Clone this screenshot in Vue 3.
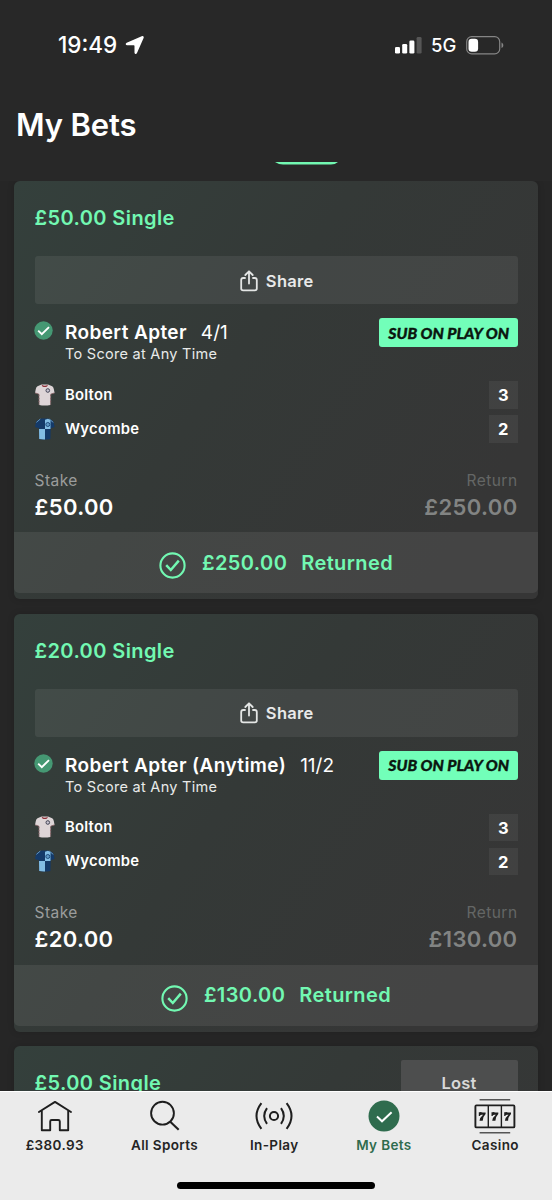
<script setup>
const bets = [
  { id: 1, stake: '£50.00', pick: 'Robert Apter', odds: '4/1', ret: '£250.00' },
  { id: 2, stake: '£20.00', pick: 'Robert Apter (Anytime)', odds: '11/2', ret: '£130.00' },
]
const teams = [
  { name: 'Bolton', score: 3, kit: 'white' },
  { name: 'Wycombe', score: 2, kit: 'blue' },
]
</script>

<template>
  <div class="screen">
    <header class="top">
      <div class="status">
        <div class="clock">
          <span class="time">19:49</span>
          <svg class="loc" width="20" height="20" viewBox="0 0 20 20"><path d="M16.700 1.200 1.700 7.700c-1.600.8-1.200 2.500.5 2.500h6.600c.5 0 .7.200.7.700v6.600c0 1.700 1.800 2.100 2.500.5L18.600 3c.6-1.300-.6-2.400-1.900-1.800Z" fill="#fff" /></svg>
        </div>
        <div class="signal">
          <svg width="28" height="18" viewBox="0 0 28 18">
            <rect x="0" y="11" width="5" height="6.500" rx="1.300" fill="#fff" />
            <rect x="7.200" y="8" width="5" height="9.500" rx="1.300" fill="#fff" />
            <rect x="14.400" y="4.500" width="5" height="13" rx="1.300" fill="#fff" />
            <rect x="21.600" y="1" width="5" height="16.500" rx="1.300" fill="#565656" />
          </svg>
          <span class="net">5G</span>
          <svg width="38" height="19" viewBox="0 0 38 19">
            <rect x=".7" y=".7" width="33" height="17.200" rx="5" fill="none" stroke="#858585" stroke-width="1.200" />
            <rect x="2.500" y="2.700" width="9.600" height="13" rx="3.200" fill="#fff" />
            <path d="M35.500 6.500c2.400 1 2.400 4.600 0 5.600Z" fill="#858585" />
          </svg>
        </div>
      </div>
      <h1>My Bets</h1>
      <svg class="tab-line" width="64" height="3" viewBox="0 0 64 3"><path d="M0 0H63Q60 2.500 56 2.500H8Q4 2.500 0 0Z" fill="#72f8b2" /></svg>
    </header>

    <main class="list">
      <article v-for="bet in bets" :key="bet.id" class="card">
        <h2>{{ bet.stake }} Single</h2>
        <button class="share">
          <svg width="18" height="22" viewBox="0 0 18 22" fill="none" stroke="#e4e6e5" stroke-width="1.800" stroke-linecap="round" stroke-linejoin="round">
            <path d="M5 8H3.200Q1.200 8 1.200 10V18.600Q1.200 20.400 3.200 20.400H14.800Q16.800 20.400 16.800 18.600V10Q16.800 8 14.800 8H13" />
            <path d="M9 13.500V1.600M5.300 5 9 1.300 12.700 5" />
          </svg>
          <span>Share</span>
        </button>
        <section class="selection">
          <svg class="tick" width="19" height="19" viewBox="0 0 19 19"><circle cx="9.500" cy="9.500" r="9.200" fill="#459873" /><path d="m4.200 9.600 3.600 3.500 7.200-7" fill="none" stroke="#fff" stroke-width="1.900" /></svg>
          <div class="pick">
            <p class="pick-line"><b>{{ bet.pick }}</b><span>{{ bet.odds }}</span></p>
            <p class="market">To Score at Any Time</p>
          </div>
          <div class="badge"><span>SUB ON PLAY ON</span></div>
        </section>
        <ul class="teams">
          <li v-for="team in teams" :key="team.name">
            <svg v-if="team.kit === 'white'" width="20" height="22" viewBox="0 0 20 22">
              <path d="M6.500.5 2.500 2.300Q1.200 3 .8 5L0 9l4 1.300.2 10.700q5.600 1 11.200 0L15.700 10.300 19.600 9l-.8-4Q18.400 3 17.200 2.300L13 .5Z" fill="#ddd5d7" />
              <path d="M6.500.5q3.300 2.700 6.500 0l-.9 1.900q-2.300 1.200-4.700 0Z" fill="#8d3038" />
              <path d="M4 10.500V20.500M15.600 10.500V20.500" stroke="#8b686c" stroke-width="1.100" stroke-dasharray="2 1" />
              <path d="m0 8.900 3.800 1.200M19.600 8.900l-3.800 1.200" stroke="#7e575b" stroke-width=".8" />
              <circle cx="12.800" cy="6.500" r="1.800" fill="#c8c4d0" stroke="#414354" stroke-width="1" />
            </svg>
            <svg v-else width="20" height="22" viewBox="0 0 20 22">
              <path d="M6.500.5 2.500 2.300Q1.200 3 .8 5L0 9l4 1.300.2 10.700q5.600 1 11.200 0L15.700 10.300 19.600 9l-.8-4Q18.400 3 17.200 2.300L13 .5Z" fill="#143a69" />
              <path d="M10 1.700 13 .8 15.500 2v9H10ZM4 11h6v10.400Q7 21.500 4.200 21Z" fill="#82bde4" />
              <path d="M1.400 4.400 5.300 1M18.300 4.400 14.200 1" stroke="#6a9dc4" stroke-width=".9" />
              <circle cx="12.800" cy="6.500" r="2" fill="#5e99c7" stroke="#204d7e" stroke-width="1" />
            </svg>
            <span class="name">{{ team.name }}</span>
            <span class="score">{{ team.score }}</span>
          </li>
        </ul>
        <section class="money">
          <div><p class="label">Stake</p><p class="amount">{{ bet.stake }}</p></div>
          <div class="right"><p class="label">Return</p><p class="amount">{{ bet.ret }}</p></div>
        </section>
        <footer class="result">
          <svg width="27" height="27" viewBox="0 0 27 27" fill="none" stroke="#72f8b2" stroke-width="2.100"><circle cx="13.500" cy="13.500" r="12.100" /><path d="m7.200 13.200 4.600 4.800 8-9.400" stroke-width="2.500" /></svg>
          <span class="paid">{{ bet.ret }}</span><span>Returned</span>
        </footer>
      </article>
      <article class="card">
        <div class="last"><h2>£5.00 Single</h2><div class="lost">Lost</div></div>
      </article>
    </main>

    <nav class="nav">
      <div class="tabs">
        <a>
          <svg width="40" height="36" viewBox="0 0 40 36" fill="none" stroke="#1e1e1e" stroke-width="1.900" stroke-linecap="round" stroke-linejoin="round"><path d="M3.900 14 20 3.900 36 14M6.800 12.400V32.200H15.200V23.500Q15.200 22 16.700 22H23.300Q24.800 22 24.800 23.500V32.200H33.200V12.400" /></svg>
          <span>£380.93</span>
        </a>
        <a>
          <svg width="40" height="36" viewBox="0 0 40 36" fill="none" stroke="#1e1e1e" stroke-width="1.900"><circle cx="17.500" cy="15.200" r="11.400" /><path d="m25 23.500 8.700 8.200" stroke-width="2.100" /></svg>
          <span>All Sports</span>
        </a>
        <a>
          <svg width="40" height="36" viewBox="0 0 40 36" fill="none" stroke="#1e1e1e" stroke-width="2"><circle cx="20" cy="18" r="4.100" /><path d="M13 10.200Q7.400 18 13 25.800M27 10.200Q32.600 18 27 25.800M7.400 5.200Q-2.400 18 7.400 30.800M32.600 5.200Q42.400 18 32.600 30.800" /></svg>
          <span>In-Play</span>
        </a>
        <a class="on">
          <svg width="40" height="36" viewBox="0 0 40 36"><circle cx="20" cy="18.100" r="15.500" fill="#2f6c4e" /><path d="m13 18.600 5 4.700 9.600-9.100" fill="none" stroke="#fff" stroke-width="2" /></svg>
          <span>My Bets</span>
        </a>
        <a>
          <svg width="42" height="36" viewBox="0 0 42 36" fill="none" stroke="#1e1e1e" stroke-width="1.900">
            <rect x="1.400" y="7.400" width="39" height="22" rx="1" /><path d="M14.300 7.400v22M27.400 7.400v22" stroke-width="1.400" /><path d="M5.600 1.800H36.200M5.600 34.800H36.200" stroke="#555" stroke-width="1.500" />
            <g fill="#1e1e1e" stroke="none"><path id="seven" d="M4.800 14.200H5.800Q6.900 13.600 8.600 14.500H11.600V16Q8.700 18.800 8.700 22.800H5.500Q5.800 19.600 9.100 16.800Q6.500 16.300 5.800 17.900H4.800Z" /><use href="#seven" x="12.700" /><use href="#seven" x="25.400" /></g>
          </svg>
          <span>Casino</span>
        </a>
      </div>
      <div class="home-bar"></div>
    </nav>
  </div>
</template>

<style>
body { background: #272727; }
</style>

<style scoped>
* { box-sizing: border-box; }
h1, h2, p, ul { margin: 0; padding: 0; }
.screen { width: 552px; height: 1200px; overflow: hidden; display: flex; flex-direction: column; background: #262626; color: #fff; font-family: Inter, "Noto Sans", sans-serif; }
.top { height: 181px; flex: none; background: #282828; }
.status { display: flex; justify-content: space-between; align-items: center; padding: 33px 48px 0 58px; height: 57px; }
.clock, .signal { display: flex; align-items: center; }
.time { font-size: 22.500px; font-weight: 550; line-height: 24px; width: 62px; white-space: nowrap; }
.loc { margin-left: 5px; }
.net { font-size: 18.500px; font-weight: 450; width: 25px; margin: 0 10px 0 8px; line-height: 24px; }
h1 { font-size: 31px; line-height: 40px; font-weight: 600; letter-spacing: -.15px; margin: 48px 0 0 16px; height: 57px; }
.tab-line { display: block; margin-left: 275px; }
.list { flex: 1; min-height: 0; overflow: hidden; padding: 0 14px; display: flex; flex-direction: column; gap: 14.500px; }
.card { flex: none; height: 418px; border-radius: 6px; background: linear-gradient(125deg, #34403c 0%, #343937 42%, #363636 85%); box-shadow: 0 0 7px rgba(0, 0, 0, .14); padding: 25px 20.500px 0; display: flex; flex-direction: column; }
h2 { color: #72f8b2; font-size: 20px; line-height: 24px; font-weight: 600; letter-spacing: .4px; white-space: nowrap; }
.share { flex: none; margin-top: 26px; height: 48px; border: 0; border-radius: 3px; background: rgba(255, 255, 255, .07); display: flex; align-items: center; justify-content: center; gap: 8px; color: #e8e9e9; font: 600 16.500px/20px Inter, sans-serif; letter-spacing: .3px; padding: 1px 0 0 1.500px; }
.selection { display: flex; margin-top: 14px; height: 62px; }
.tick { margin: 3px 0 0 -1px; }
.pick { margin-left: 12.500px; flex: 1; padding-top: 3px; }
.pick-line { font-size: 19px; line-height: 24px; white-space: nowrap; }
.pick-line b { font-weight: 600; letter-spacing: .39px; margin-right: 14px; }
.market { font-size: 14.500px; line-height: 20px; letter-spacing: .28px; color: #e8eae9; margin-top: -1px; }
.badge { width: 138.500px; height: 29px; background: #72ffb9; border-radius: 3px; color: #0b1710; display: flex; align-items: center; justify-content: center; font: italic 900 14.800px/20px Lato, sans-serif; white-space: nowrap; }
.badge span { display: inline-block; transform: scaleX(1.065); -webkit-text-stroke: .35px #0b1710; }
.teams { list-style: none; display: flex; flex-direction: column; gap: 6.700px; margin-top: 1px; }
.teams li { display: flex; align-items: center; height: 27.500px; }
.name { flex: 1; margin-left: 10.500px; font-size: 14.800px; font-weight: 600; letter-spacing: .25px; }
.score { width: 28.500px; height: 27.500px; line-height: 28px; background: rgba(255, 255, 255, .06); text-align: center; font-size: 16.500px; font-weight: 700; }
.money { display: flex; justify-content: space-between; margin-top: 27px; }
.label { font-size: 15.500px; line-height: 22px; color: #9b9d9c; letter-spacing: .45px; }
.amount { font-size: 22px; line-height: 31px; font-weight: 600; letter-spacing: .35px; }
.right { text-align: right; }
.right .label { color: #646665; }
.right .amount { color: #828483; }
.result { margin: auto -20.500px 6px; height: 61px; flex: none; background: rgba(255, 255, 255, .075); border-radius: 0 0 5px 5px; display: flex; align-items: center; justify-content: center; color: #72f8b2; font-size: 20px; font-weight: 600; letter-spacing: .4px; }
.result svg { margin: 6px 16px 0 0; }
.paid { margin-right: 14px; }
.last { display: flex; justify-content: space-between; }
.lost { width: 117px; height: 48px; line-height: 47px; margin-top: -11px; border-radius: 2px; background: #4d4e4e; color: #d8d8d8; text-align: center; font-size: 16.500px; font-weight: 600; letter-spacing: .2px; }
.nav { flex: none; height: 109px; background: #ebebeb; border-top: 1px solid #fff; color: #242424; position: relative; }
.tabs { display: grid; grid-template-columns: repeat(4, 109.700px) 113px; margin-top: 6px; }
.tabs a { display: flex; flex-direction: column; align-items: center; font-size: 13.500px; line-height: 20px; font-weight: 600; letter-spacing: .38px; }
.tabs svg { margin-bottom: .5px; }
.on { color: #2f6c4e; }
.home-bar { width: 198px; height: 7px; border-radius: 4px; background: #000; margin: 27px auto 0; }
</style>
